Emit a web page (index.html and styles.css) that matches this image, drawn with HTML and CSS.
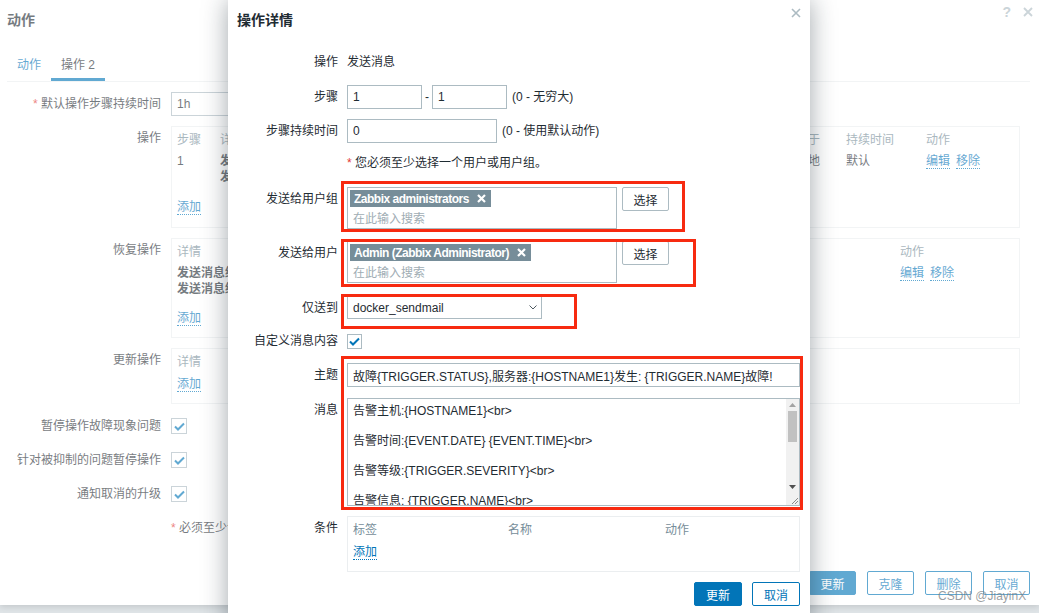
FILE: index.html
```html
<!DOCTYPE html>
<html lang="zh-CN">
<head>
    <meta charset="UTF-8">
    <meta name="viewport" content="width=device-width, initial-scale=1.0">
    <title>动作 - 操作详情</title>
    <link rel="stylesheet" href="styles.css">
</head>
<body>
    <div class="page">
        <!-- Action dialog (behind) -->
        <div class="action-dialog">
            <div class="faded">
                <div class="dlg-head">
                    <h4>动作</h4>
                    <div class="head-icons">
                        <span class="help">?</span>
                        <svg width="10" height="10" viewBox="0 0 10 10"><path d="M1 1L9 9M9 1L1 9" stroke="#acbbc2" stroke-width="1.8"/></svg>
                    </div>
                </div>

                <div class="tabs">
                    <a class="tab">动作</a>
                    <a class="tab active">操作 2</a>
                </div>

                <div class="form">
                    <label class="lbl"><span class="req">*</span> 默认操作步骤持续时间</label>
                    <div><input class="text w-wide" type="text" value="1h"></div>

                    <label class="lbl">操作</label>
                    <div class="box box-ops">
                        <div class="ops-grid">
                            <span class="th">步骤</span>
                            <span class="th">详情</span>
                            <span class="th">开始于</span>
                            <span class="th">持续时间</span>
                            <span class="th">动作</span>
                            <span class="td">1</span>
                            <span class="td"><b>发送消息给用户组:</b> Zabbix administrators 通过 所有介质<br><b>发送消息给用户:</b> Admin (Zabbix Administrator) 通过 docker_sendmail</span>
                            <span class="td">立即地</span>
                            <span class="td">默认</span>
                            <span class="td"><a class="link">编辑</a><a class="link">移除</a></span>
                        </div>
                        <div class="add-row"><a class="link">添加</a></div>
                    </div>

                    <label class="lbl">恢复操作</label>
                    <div class="box box-rec">
                        <div class="rec-grid">
                            <span class="th">详情</span>
                            <span class="th">动作</span>
                            <span class="td"><b>发送消息给用户组:</b> Zabbix administrators 通过 所有介质<br><b>发送消息给用户:</b> Admin (Zabbix Administrator) 通过 所有介质</span>
                            <span class="td"><a class="link">编辑</a><a class="link">移除</a></span>
                        </div>
                        <div class="add-row"><a class="link">添加</a></div>
                    </div>

                    <label class="lbl">更新操作</label>
                    <div class="box box-upd">
                        <div class="th">详情</div>
                        <div class="add-row"><a class="link">添加</a></div>
                    </div>

                    <label class="lbl">暂停操作故障现象问题</label>
                    <div class="cb-cell">
                        <span class="cb cb-big"><svg width="11" height="9" viewBox="0 0 11 9"><path d="M1 4.5L4 7.5L10 1.5" fill="none" stroke="#0275b8" stroke-width="2"/></svg></span>
                    </div>

                    <label class="lbl">针对被抑制的问题暂停操作</label>
                    <div class="cb-cell">
                        <span class="cb cb-big"><svg width="11" height="9" viewBox="0 0 11 9"><path d="M1 4.5L4 7.5L10 1.5" fill="none" stroke="#0275b8" stroke-width="2"/></svg></span>
                    </div>

                    <label class="lbl">通知取消的升级</label>
                    <div class="cb-cell">
                        <span class="cb cb-big"><svg width="11" height="9" viewBox="0 0 11 9"><path d="M1 4.5L4 7.5L10 1.5" fill="none" stroke="#0275b8" stroke-width="2"/></svg></span>
                    </div>

                    <span></span>
                    <div class="note"><span class="req">*</span> 必须至少设置一个操作、恢复操作或更新操作。</div>
                </div>

                <div class="dlg-foot">
                    <button class="btn btn-primary">更新</button>
                    <button class="btn">克隆</button>
                    <button class="btn">删除</button>
                    <button class="btn">取消</button>
                </div>
            </div>
        </div>

        <!-- Operation details dialog -->
        <div class="op-dialog">
            <div class="op-head">
                <h4>操作详情</h4>
                <svg class="op-close" width="10" height="10" viewBox="0 0 10 10"><path d="M1 1L9 9M9 1L1 9" stroke="#acbbc2" stroke-width="1.6"/></svg>
            </div>

            <div class="op-body">
                <label class="lbl">操作</label>
                <div class="val">发送消息</div>

                <label class="lbl">步骤</label>
                <div class="val">
                    <input class="text w-step" type="text" value="1">
                    <span class="dash">-</span>
                    <input class="text w-step" type="text" value="1">
                    <span class="hint">(0 - 无穷大)</span>
                </div>

                <label class="lbl">步骤持续时间</label>
                <div class="val">
                    <input class="text w-dur" type="text" value="0">
                    <span class="hint">(0 - 使用默认动作)</span>
                </div>

                <span></span>
                <div class="val-note"><span class="req">*</span> 您必须至少选择一个用户或用户组。</div>

                <label class="lbl">发送给用户组</label>
                <div class="val-top">
                    <div class="ms">
                        <span class="tag"><span>Zabbix administrators</span><svg width="9" height="9" viewBox="0 0 9 9"><path d="M1 1L8 8M8 1L1 8" stroke="#fff" stroke-width="2.2"/></svg></span>
                        <div class="ms-input">在此输入搜索</div>
                    </div>
                    <button class="btn-grey">选择</button>
                </div>

                <label class="lbl">发送给用户</label>
                <div class="val-top">
                    <div class="ms">
                        <span class="tag"><span>Admin (Zabbix Administrator)</span><svg width="9" height="9" viewBox="0 0 9 9"><path d="M1 1L8 8M8 1L1 8" stroke="#fff" stroke-width="2.2"/></svg></span>
                        <div class="ms-input">在此输入搜索</div>
                    </div>
                    <button class="btn-grey">选择</button>
                </div>

                <label class="lbl">仅送到</label>
                <div class="val-top">
                    <div class="select">
                        <span>docker_sendmail</span>
                        <svg width="8" height="5" viewBox="0 0 8 5"><path d="M0.5 0.5L4 4L7.5 0.5" fill="none" stroke="#4f5a61" stroke-width="1"/></svg>
                    </div>
                </div>

                <label class="lbl">自定义消息内容</label>
                <div class="cb-cell">
                    <span class="cb"><svg width="11" height="9" viewBox="0 0 11 9"><path d="M1 4.5L4 7.5L10 1.5" fill="none" stroke="#0275b8" stroke-width="2"/></svg></span>
                </div>

                <label class="lbl">主题</label>
                <div><input class="text w-full" type="text" value="故障{TRIGGER.STATUS},服务器:{HOSTNAME1}发生: {TRIGGER.NAME}故障!"></div>

                <label class="lbl">消息</label>
                <div class="msg-wrap">
                    <textarea class="message">告警主机:{HOSTNAME1}&lt;br&gt;

告警时间:{EVENT.DATE} {EVENT.TIME}&lt;br&gt;

告警等级:{TRIGGER.SEVERITY}&lt;br&gt;

告警信息: {TRIGGER.NAME}&lt;br&gt;

告警项目:{TRIGGER.KEY1}&lt;br&gt;

问题详情:{ITEM.NAME}:{ITEM.VALUE}&lt;br&gt;

当前状态:{TRIGGER.STATUS}:{ITEM.VALUE1}&lt;br&gt;

事件ID:{EVENT.ID}</textarea>
                    <!-- scrollbar drawn over the textarea -->
                    <div class="sb">
                        <div class="sb-btn"><svg width="7" height="4" viewBox="0 0 7 4"><path d="M0 4L3.5 0L7 4z" fill="#a3a3a3"/></svg></div>
                        <div class="sb-track"><div class="sb-thumb"></div></div>
                        <div class="sb-btn"><svg width="7" height="4" viewBox="0 0 7 4"><path d="M0 0L3.5 4L7 0z" fill="#505050"/></svg></div>
                        <div class="sb-corner"><svg width="7" height="7" viewBox="0 0 7 7"><path d="M1 7L7 1M4 7L7 4" stroke="#8a8a8a" stroke-width="1"/></svg></div>
                    </div>
                </div>

                <label class="lbl">条件</label>
                <div class="box cond">
                    <div class="cond-grid">
                        <span class="th">标签</span>
                        <span class="th">名称</span>
                        <span class="th">动作</span>
                    </div>
                    <div class="cond-add"><a class="link">添加</a></div>
                </div>
            </div>

            <div class="op-foot">
                <button class="btn btn-primary">更新</button>
                <button class="btn">取消</button>
            </div>
        </div>

        <!-- red highlight frames -->
        <div class="mark mark-groups"></div>
        <div class="mark mark-users"></div>
        <div class="mark mark-media"></div>
        <div class="mark mark-message"></div>

        <div class="watermark">CSDN @JiayinX</div>
    </div>
</body>
</html>
```

FILE: styles.css
```css
* {
    box-sizing: border-box;
}

body {
    margin: 0;
    background-color: #dfe4e7;
    font-family: "Liberation Sans", Arial, "Noto Sans CJK SC", sans-serif;
    font-size: 12px;
    color: #1f2c33;
    overflow: hidden;
}

.page {
    position: relative;
    width: 1039px;
    height: 613px;
    overflow: hidden;
}

a {
    color: #0275b8;
    text-decoration: none;
}

.link {
    border-bottom: 1px dotted #0275b8;
}

.req {
    color: #e33734;
}

/* Inputs */
.text {
    height: 24px;
    border: 1px solid #acbbc2;
    padding: 0 5px;
    font: inherit;
    color: #1f2c33;
    background: #fff;
    outline: none;
}

.w-wide { width: 300px; }
.w-step { width: 75px; }
.w-dur { width: 150px; }
.w-full { width: 100%; }

.cb {
    width: 15px;
    height: 15px;
    border: 1px solid #acbbc2;
    display: flex;
    align-items: center;
    justify-content: center;
    background: #fff;
}

.cb-big {
    width: 16px;
    height: 16px;
}

.cb-cell {
    height: 24px;
    display: flex;
    align-items: center;
}

.btn {
    height: 24px;
    width: 47px;
    padding: 0;
    border: 1px solid #0275b8;
    border-radius: 2px;
    background: #fff;
    color: #0275b8;
    font: inherit;
}

.btn-primary {
    background: #0275b8;
    color: #fff;
}

.btn-grey {
    height: 24px;
    width: 47px;
    padding: 0;
    border: 1px solid #acbbc2;
    border-radius: 2px;
    background: #fff;
    color: #1f2c33;
    font: inherit;
}

.lbl {
    text-align: right;
    line-height: 24px;
    white-space: nowrap;
}

.th {
    color: #768d99;
    line-height: 18px;
}

.td {
    line-height: 16px;
    white-space: nowrap;
    overflow: hidden;
}

.td .link {
    margin-right: 6px;
}

.box {
    border: 1px solid #ebeef0;
    padding: 4px 5px 10px;
}

.add-row {
    line-height: 18px;
}

/* Action dialog behind */
.action-dialog {
    height: 605px;
    background: #fff;
    box-shadow: 0 2px 6px rgba(0, 0, 0, 0.12);
}

.faded {
    height: 100%;
    display: flex;
    flex-direction: column;
    opacity: 0.62;
}

.dlg-head {
    display: flex;
    justify-content: space-between;
    height: 40px;
    padding: 0 6px 0 7px;
}

.dlg-head h4 {
    margin: 0;
    font-size: 14px;
    line-height: 40px;
}

.head-icons {
    display: flex;
    align-items: center;
    gap: 12px;
    height: 24px;
}

.help {
    color: #acbbc2;
    font-size: 14px;
    font-weight: bold;
}

.tabs {
    display: flex;
    margin: 0 9px 0 7px;
    padding-top: 13px;
    border-bottom: 1px solid #ebeef0;
}

.tab {
    padding: 0 10px 1px;
    line-height: 24px;
    border-bottom: 3px solid transparent;
}

.tab.active {
    color: #1f2c33;
    border-bottom-color: #0275b8;
}

.form {
    display: grid;
    grid-template-columns: 161px 1fr;
    column-gap: 10px;
    row-gap: 10px;
    padding: 10px 19px 0 0;
    align-items: start;
}

.ops-grid {
    display: grid;
    grid-template-columns: 43px 1fr 62px 80px 88px;
    row-gap: 4px;
}

.rec-grid {
    display: grid;
    grid-template-columns: 1fr 114px;
    row-gap: 4px;
}

.box-ops {
    padding-bottom: 11px;
}

.box-ops .add-row {
    margin-top: 13px;
}

.box-rec .add-row {
    margin-top: 12px;
}

.box-upd .add-row {
    margin-top: 4px;
}

.note {
    line-height: 24px;
}

.dlg-foot {
    margin-top: auto;
    display: flex;
    justify-content: flex-end;
    gap: 11px;
    padding: 0 9px 10px;
}

/* Operation details dialog */
.op-dialog {
    position: absolute;
    left: 228px;
    top: 0;
    width: 582px;
    height: 640px;
    background: #fff;
    box-shadow: 0 0 24px rgba(20, 35, 45, 0.4);
}

.op-head {
    display: flex;
    justify-content: space-between;
    height: 40px;
    padding: 0 9px;
}

.op-head h4 {
    margin: 0;
    font-size: 14px;
    line-height: 40px;
}

.op-close {
    margin-top: 8px;
}

.op-body {
    display: grid;
    grid-template-columns: 100px 1fr;
    grid-template-rows: 25px 24px 24px 24px 44px 45px 23px 24px 25px 108px 56px;
    column-gap: 9px;
    row-gap: 10px;
    padding: 10px 10px 0;
}

.val {
    display: flex;
    align-items: center;
    height: 24px;
    line-height: 24px;
}

.dash {
    margin: 0 3px;
}

.hint {
    margin-left: 5px;
}

.val-note {
    line-height: 20px;
}

.val-top {
    display: flex;
    align-items: flex-start;
    gap: 5px;
}

.ms {
    width: 270px;
    height: 42px;
    border: 1px solid #acbbc2;
    padding: 2px;
}

.tag {
    display: inline-flex;
    align-items: center;
    gap: 8px;
    height: 17px;
    padding: 0 5px 0 4px;
    background: #768d99;
    color: #fff;
    font-weight: bold;
    letter-spacing: -0.5px;
}

.ms-input {
    padding: 2px 0 0 3px;
    line-height: 20px;
    color: #a0adb4;
}

.select {
    width: 195px;
    height: 23px;
    border: 1px solid #acbbc2;
    display: flex;
    align-items: center;
    justify-content: space-between;
    padding: 0 4px 0 5px;
}

.msg-wrap {
    position: relative;
    height: 108px;
}

.message {
    display: block;
    width: 100%;
    height: 108px;
    border: 1px solid #acbbc2;
    padding: 5px 20px 4px 5px;
    font: inherit;
    line-height: 15px;
    color: #1f2c33;
    overflow: hidden;
    resize: none;
    outline: none;
}

.sb {
    position: absolute;
    top: 1px;
    right: 1px;
    bottom: 1px;
    width: 13px;
    background: #f1f1f1;
    display: flex;
    flex-direction: column;
}

.sb-btn {
    height: 12px;
    display: flex;
    align-items: center;
    justify-content: center;
}

.sb-track {
    flex: 1;
    padding: 0 2px;
}

.sb-thumb {
    height: 31px;
    background: #c1c1c1;
}

.sb-corner {
    height: 12px;
    display: flex;
    align-items: flex-end;
    justify-content: flex-end;
    padding: 0 1px 1px 0;
}

.cond {
    padding: 4px 5px 9px;
}

.cond-grid {
    display: grid;
    grid-template-columns: 155px 157px 1fr;
}

.cond-add {
    margin-top: 4px;
    line-height: 18px;
}

.op-foot {
    display: flex;
    justify-content: flex-end;
    gap: 10px;
    padding: 10px 10px 0;
}

.op-foot .btn {
    width: 48px;
}

/* Red highlight frames drawn over the screenshot */
.mark {
    position: absolute;
    border: 3px solid #f72a10;
}

.mark-groups {
    left: 341px;
    top: 181px;
    width: 344px;
    height: 51px;
}

.mark-users {
    left: 341px;
    top: 239px;
    width: 355px;
    height: 48px;
}

.mark-media {
    left: 341px;
    top: 294px;
    width: 236px;
    height: 35px;
}

.mark-message {
    left: 341px;
    top: 356px;
    width: 462px;
    height: 154px;
}

.watermark {
    position: absolute;
    left: 938px;
    top: 589px;
    font-size: 12px;
    line-height: 14px;
    color: rgba(120, 125, 130, 0.75);
}
```
